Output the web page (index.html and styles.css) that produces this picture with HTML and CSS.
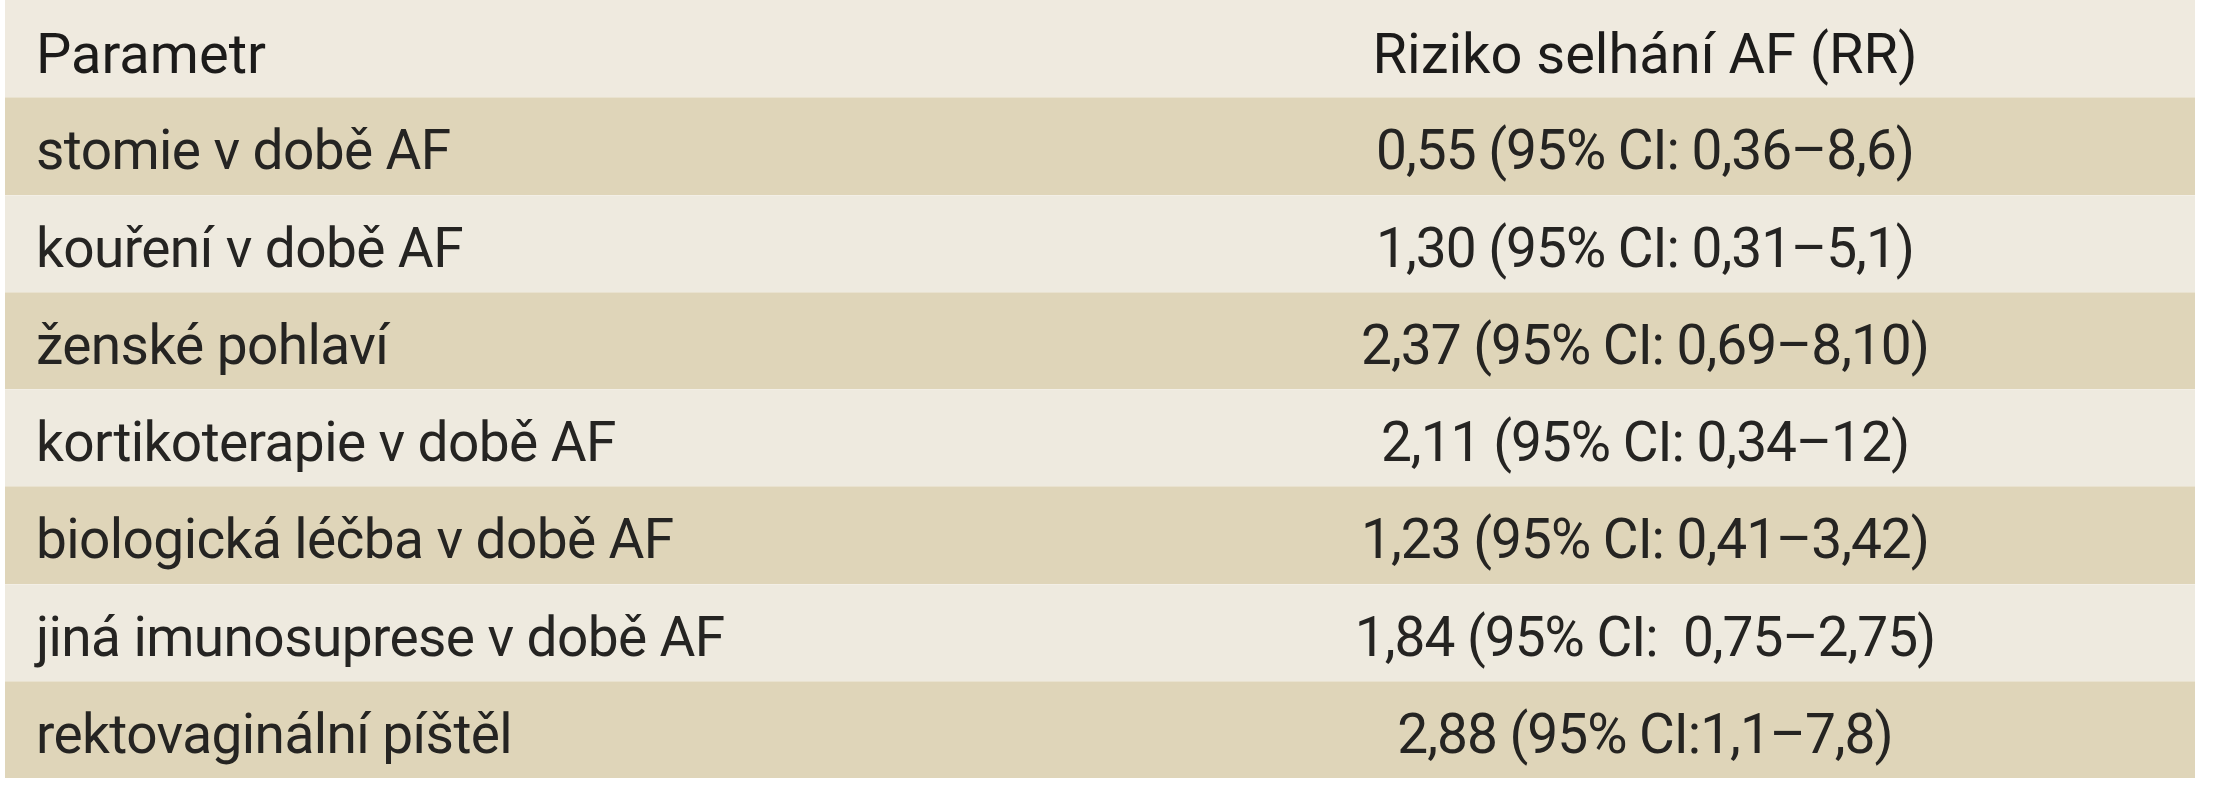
FILE: index.html
```html
<!DOCTYPE html>
<html lang="cs">
<head>
<meta charset="utf-8">
<title>Riziko selhání AF</title>
<link rel="stylesheet" href="styles.css">
</head>
<body>
<div class="table">
  <div class="row head">
    <div class="c1">Parametr</div>
    <div class="c2">Riziko selhání AF (RR)</div>
  </div>
  <div class="row dark">
    <div class="c1">stomie v době AF</div>
    <div class="c2">0,55 (95% CI: 0,36–8,6)</div>
  </div>
  <div class="row light">
    <div class="c1">kouření v době AF</div>
    <div class="c2">1,30 (95% CI: 0,31–5,1)</div>
  </div>
  <div class="row dark">
    <div class="c1">ženské pohlaví</div>
    <div class="c2">2,37 (95% CI: 0,69–8,10)</div>
  </div>
  <div class="row light">
    <div class="c1">kortikoterapie v době AF</div>
    <div class="c2">2,11 (95% CI: 0,34–12)</div>
  </div>
  <div class="row dark">
    <div class="c1">biologická léčba v době AF</div>
    <div class="c2">1,23 (95% CI: 0,41–3,42)</div>
  </div>
  <div class="row light">
    <div class="c1">jiná imunosuprese v době AF</div>
    <div class="c2">1,84 (95% CI:&nbsp; 0,75–2,75)</div>
  </div>
  <div class="row dark">
    <div class="c1">rektovaginální píštěl</div>
    <div class="c2">2,88 (95% CI:1,1–7,8)</div>
  </div>
</div>
</body>
</html>
```

FILE: styles.css
```css
html, body {
  margin: 0;
  padding: 0;
  background: #ffffff;
}

body {
  font-family: Roboto, "Liberation Sans", sans-serif;
  color: #252422;
}

.table {
  margin-left: 5px;
  width: 2190px;
}

.row {
  display: grid;
  grid-template-columns: 1090px 1fr;
  height: 97.25px;
  box-sizing: border-box;
  font-size: 55px;
  line-height: 64.5px;
  padding-top: 20px;
  letter-spacing: -0.6px;
  white-space: pre;
}

.row.head {
  background: #efeadf;
  font-size: 56px;
  line-height: 65.6px;
  padding-top: 22px;
  letter-spacing: 0;
  color: #1c1b1a;
}

.row.dark {
  background: #dfd5b9;
  border-top: 1px solid #e9e2cf;
}

.row.light {
  background: #eeeadf;
  border-top: 1px solid #f3efe6;
}

.c1 {
  padding-left: 31px;
}

.c2 {
  text-align: center;
  letter-spacing: -1px;
}

.row.head .c2 {
  letter-spacing: 0;
}
```
